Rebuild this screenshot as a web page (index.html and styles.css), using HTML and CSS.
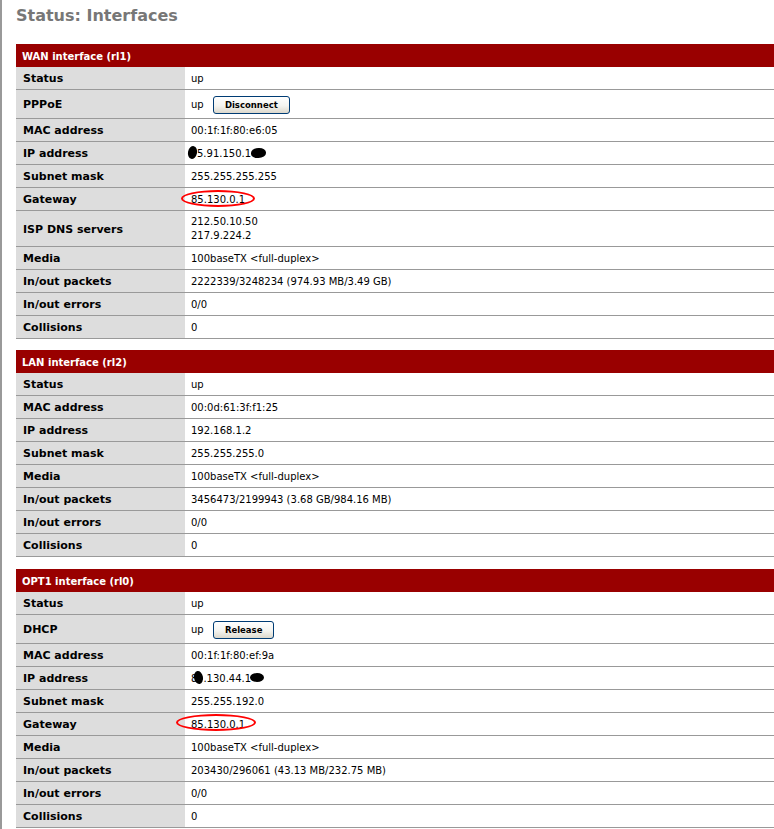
FILE: index.html
```html
<!DOCTYPE html>
<html lang="en">
<head>
    <meta charset="UTF-8">
    <title>Status: Interfaces</title>
    <link rel="stylesheet" href="styles.css">
</head>
<body>
    <div class="page">
        <h1 class="pgtitle">Status: Interfaces</h1>

        <!-- WAN -->
        <table class="iface iface-first">
            <colgroup><col class="col-lbl"><col></colgroup>
            <tr><th colspan="2">WAN interface (rl1)</th></tr>
            <tr><td class="lbl">Status</td><td>up</td></tr>
            <tr><td class="lbl">PPPoE</td><td>up <button class="btn">Disconnect</button></td></tr>
            <tr><td class="lbl">MAC address</td><td>00:1f:1f:80:e6:05</td></tr>
            <tr><td class="lbl">IP address</td><td><i class="blot blot-a"></i>5.91.150.1<i class="blot blot-b"></i></td></tr>
            <tr><td class="lbl">Subnet mask</td><td>255.255.255.255</td></tr>
            <tr><td class="lbl">Gateway</td><td><span class="circled">85.130.0.1</span></td></tr>
            <tr><td class="lbl">ISP DNS servers</td><td class="multi">212.50.10.50<br>217.9.224.2</td></tr>
            <tr><td class="lbl">Media</td><td>100baseTX &lt;full-duplex&gt;</td></tr>
            <tr><td class="lbl">In/out packets</td><td>2222339/3248234 (974.93 MB/3.49 GB)</td></tr>
            <tr><td class="lbl">In/out errors</td><td>0/0</td></tr>
            <tr><td class="lbl">Collisions</td><td>0</td></tr>
        </table>

        <!-- LAN -->
        <table class="iface">
            <colgroup><col class="col-lbl"><col></colgroup>
            <tr><th colspan="2">LAN interface (rl2)</th></tr>
            <tr><td class="lbl">Status</td><td>up</td></tr>
            <tr><td class="lbl">MAC address</td><td>00:0d:61:3f:f1:25</td></tr>
            <tr><td class="lbl">IP address</td><td>192.168.1.2</td></tr>
            <tr><td class="lbl">Subnet mask</td><td>255.255.255.0</td></tr>
            <tr><td class="lbl">Media</td><td>100baseTX &lt;full-duplex&gt;</td></tr>
            <tr><td class="lbl">In/out packets</td><td>3456473/2199943 (3.68 GB/984.16 MB)</td></tr>
            <tr><td class="lbl">In/out errors</td><td>0/0</td></tr>
            <tr><td class="lbl">Collisions</td><td>0</td></tr>
        </table>

        <!-- OPT1 -->
        <table class="iface">
            <colgroup><col class="col-lbl"><col></colgroup>
            <tr><th colspan="2">OPT1 interface (rl0)</th></tr>
            <tr><td class="lbl">Status</td><td>up</td></tr>
            <tr><td class="lbl">DHCP</td><td>up <button class="btn">Release</button></td></tr>
            <tr><td class="lbl">MAC address</td><td>00:1f:1f:80:ef:9a</td></tr>
            <tr><td class="lbl">IP address</td><td>8<i class="blot blot-c"></i>.130.44.1<i class="blot blot-d"></i></td></tr>
            <tr><td class="lbl">Subnet mask</td><td>255.255.192.0</td></tr>
            <tr><td class="lbl">Gateway</td><td><span class="circled circled-wide">85.130.0.1</span></td></tr>
            <tr><td class="lbl">Media</td><td>100baseTX &lt;full-duplex&gt;</td></tr>
            <tr><td class="lbl">In/out packets</td><td>203430/296061 (43.13 MB/232.75 MB)</td></tr>
            <tr><td class="lbl">In/out errors</td><td>0/0</td></tr>
            <tr><td class="lbl">Collisions</td><td>0</td></tr>
        </table>
    </div>
</body>
</html>
```

FILE: styles.css
```css
body {
    margin: 0;
    border-left: 2px solid #999;
    min-height: 829px;
    overflow: hidden;
    background: #fff;
    color: #000;
    font-family: "DejaVu Sans", Verdana, sans-serif;
    font-size: 10px;
}
.page {
    padding-left: 14px;
}
.pgtitle {
    margin: 0 0 18px 0;
    padding-top: 6px;
    font-size: 16px;
    line-height: 20px;
    font-weight: bold;
    color: #777;
}
.iface {
    width: 100%;
    border-collapse: collapse;
    table-layout: fixed;
    margin-bottom: 12px;
}
.iface-first {
    margin-bottom: 11px;
}
.col-lbl {
    width: 169px;
}
.iface th {
    background: #990000;
    color: #fff;
    font-weight: bold;
    text-align: left;
    padding: 3px 6px 0;
    line-height: 20px;
}
.iface td {
    padding: 5px 6px 3px;
    line-height: 14px;
    border-bottom: 1px solid #999;
    vertical-align: middle;
}
.iface td.multi {
    padding-top: 4px;
}
.iface td.lbl {
    background: #ddd;
    font-weight: bold;
    font-size: 11px;
    padding-left: 7px;
}
.btn {
    font-family: "DejaVu Sans", Verdana, sans-serif;
    font-size: 8.5px;
    font-weight: bold;
    color: #000;
    height: 18px;
    padding: 0 11px;
    margin: 1px 0 1px 6px;
    border: 1px solid #003c74;
    border-radius: 3px;
    background: linear-gradient(#ffffff, #f4f4f0 55%, #dcd8cc);
    vertical-align: middle;
}

/* red marker rings drawn over the gateway values */
.circled {
    position: relative;
}
.circled::after {
    content: "";
    position: absolute;
    left: -10px;
    right: -10px;
    top: -4px;
    bottom: -2px;
    border: 2px solid #f00;
    border-radius: 50%;
}
.circled-wide::after {
    left: -15px;
    right: -11px;
    top: -5px;
    bottom: -1px;
}

/* ink blots hiding parts of the addresses */
.blot {
    display: inline-block;
    background: #000;
    border-radius: 50%;
    margin-top: -5px;
}
.blot-a {
    width: 9px;
    height: 13px;
    margin-left: -3px;
    vertical-align: -2px;
    transform: rotate(12deg);
}
.blot-b {
    width: 15px;
    height: 10px;
    margin-left: 0;
    vertical-align: -1px;
    border-radius: 50% 45% 50% 40%;
}
.blot-c {
    width: 9px;
    height: 13px;
    margin-left: -3px;
    vertical-align: -2px;
    transform: rotate(-10deg);
}
.blot-d {
    width: 14px;
    height: 9px;
    margin-left: -1px;
    vertical-align: 0;
}
```
